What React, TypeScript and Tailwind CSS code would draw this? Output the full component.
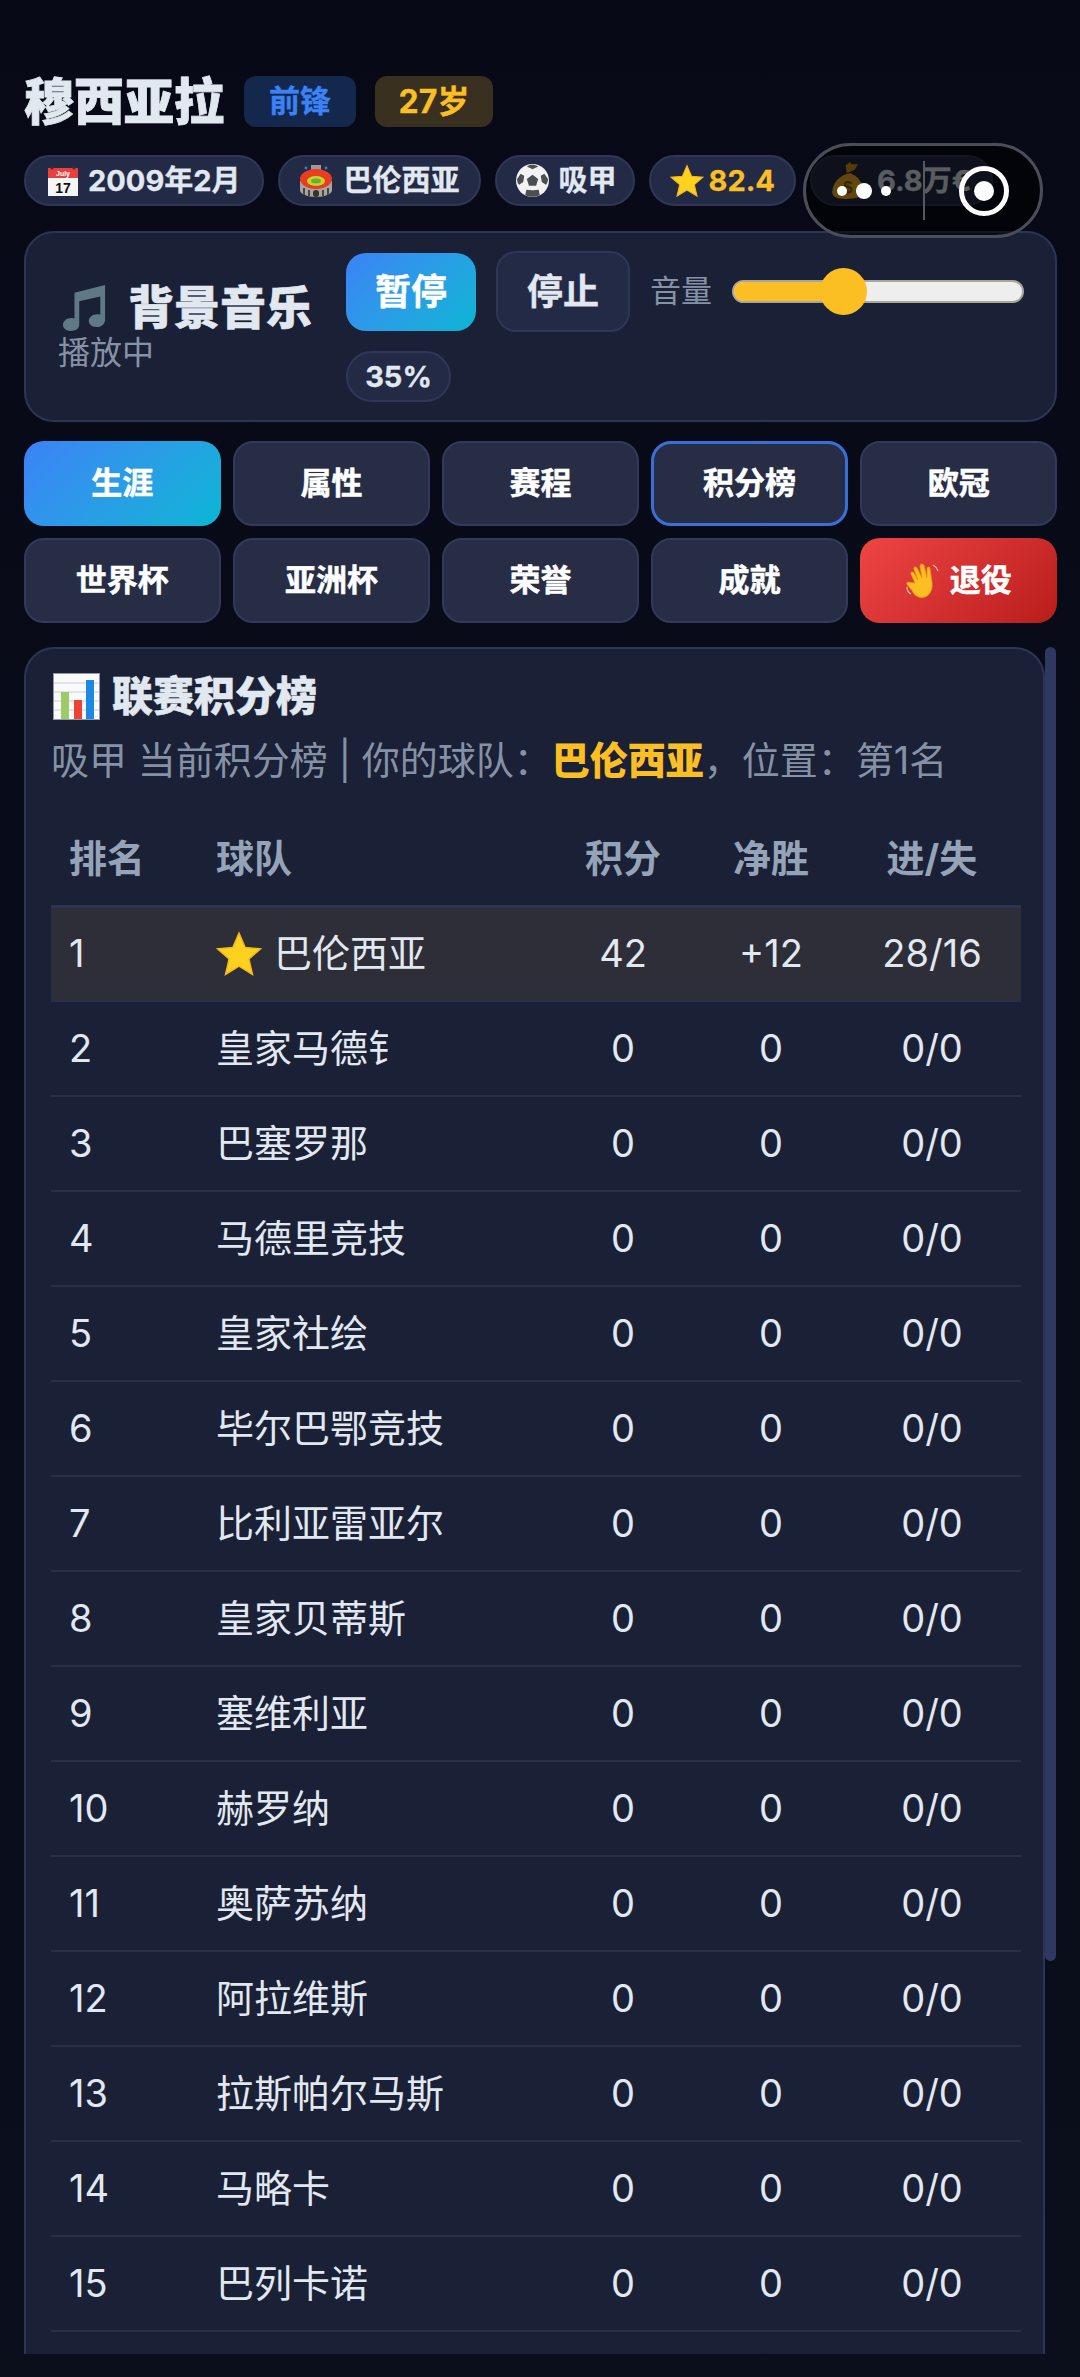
const teams = [
  "皇家马德钅",
  "巴塞罗那",
  "马德里竞技",
  "皇家社绘",
  "毕尔巴鄂竞技",
  "比利亚雷亚尔",
  "皇家贝蒂斯",
  "塞维利亚",
  "赫罗纳",
  "奥萨苏纳",
  "阿拉维斯",
  "拉斯帕尔马斯",
  "马略卡",
  "巴列卡诺",
];

const tabs = ["生涯", "属性", "赛程", "积分榜", "欧冠", "世界杯", "亚洲杯", "荣誉", "成就"];

function Star({ size }: { size: number }) {
  return (
    <svg width={size} height={size} viewBox="0 0 32 32" className="shrink-0">
      <path
        d="M16 1.5l4.3 10 10.7.9-8.1 7.1 2.5 10.7L16 24.5l-9.4 5.7 2.5-10.7L1 12.4l10.7-.9z"
        fill="#fcd21f"
        stroke="#f4b71c"
        strokeWidth="1"
      />
    </svg>
  );
}

function CalendarIcon() {
  return (
    <svg width="30" height="32" viewBox="0 0 30 32" className="shrink-0">
      <rect x="0" y="3" width="30" height="28" fill="#f5f5f5" />
      <rect x="0" y="3" width="30" height="10" fill="#e8403c" />
      <circle cx="4" cy="3" r="1.5" fill="#333" />
      <circle cx="26" cy="3" r="1.5" fill="#333" />
      <text x="15" y="11" textAnchor="middle" fontSize="7" fill="#fff" fontFamily="Liberation Sans">
        July
      </text>
      <text x="15" y="28" textAnchor="middle" fontSize="14" fontWeight="700" fill="#111" fontFamily="Liberation Sans">
        17
      </text>
    </svg>
  );
}

function StadiumIcon() {
  return (
    <svg width="34" height="34" viewBox="0 0 34 34" className="shrink-0">
      <rect x="12" y="1" width="10" height="5" fill="#9a9a9a" />
      <circle cx="7" cy="4" r="1.4" fill="#3d7bd9" />
      <circle cx="27" cy="4" r="1.4" fill="#3d7bd9" />
      <path d="M1 17h32v9c0 4-7 7-16 7S1 30 1 26z" fill="#a8a49f" />
      <path d="M5 24v7M10 26v6M24 26v6M29 24v7" stroke="#4a4642" strokeWidth="2" />
      <rect x="14" y="26" width="6" height="7" rx="3" fill="#35312e" />
      <ellipse cx="17" cy="15" rx="16" ry="10" fill="#ea3c1e" />
      <ellipse cx="17" cy="17" rx="9" ry="5" fill="#c5d42c" />
      <ellipse cx="17" cy="17" rx="5" ry="2.5" fill="#6cae34" />
    </svg>
  );
}

function SoccerIcon() {
  return (
    <svg width="33" height="33" viewBox="0 0 32 32" className="shrink-0">
      <circle cx="16" cy="16" r="16" fill="#f2f2f2" />
      <path d="M16 10.5l5.5 4-2 6.5h-7l-2-6.5z" fill="#4a4f52" />
      <path d="M10.5 2.5L16 5l5.5-2.5C18 0 13.5 0 10.5 2.5z" fill="#4a4f52" />
      <path d="M1 14.5l3.5-5 3.5 2-1 6-4 2.5c-1.5-1.5-2-3.5-2-5.5z" fill="#4a4f52" />
      <path d="M31 14.5l-3.500-5-3.500 2 1 6 4 2.500c1.500-1.500 2-3.500 2-5.500z" fill="#4a4f52" />
      <path d="M9 30l1-5 5 .5 2 0 5-.5 1 5c-4 2.500-10 2.500-14 0z" fill="#4a4f52" />
    </svg>
  );
}

function MoneyBagIcon() {
  return (
    <svg width="36" height="38" viewBox="0 0 32 34" className="shrink-0">
      <path d="M17 10C8 11 1 19 1 27c0 5 6 6 13 6s15-1 15-7c0-6-5-14-12-16z" fill="#f4b024" />
      <path d="M14 10l7-3 3-5-6 0-1-2-4 3z" fill="#d9951a" />
      <text x="15" y="28" textAnchor="middle" fontSize="15" fontWeight="700" fill="#8a5a0c" fontFamily="Liberation Sans">
        $
      </text>
    </svg>
  );
}

function MusicIcon() {
  return (
    <svg width="44" height="48" viewBox="0 0 46 50" className="ml-[5px] shrink-0">
      <path
        d="M12 10L44 2v36c0 5-4 8-9 8s-8-3-8-6.5c0-4 4-7 9-7 1.5 0 2.5.2 3 .5V14L17 19v24c0 5-4 7-9 7s-8-3-8-6.5c0-4 4-7 9-7 1 0 2.5.2 3 .5z"
        fill="#5f7986"
      />
    </svg>
  );
}

function ChartIcon() {
  return (
    <svg width="47" height="47" viewBox="0 0 47 47" className="ml-[2px] shrink-0">
      <rect x="0.5" y="0.5" width="46" height="46" fill="#fafafa" stroke="#8f99ab" />
      <path d="M1 10h45M1 19h45M1 28h45M1 37h45" stroke="#c9ced6" strokeWidth="1" />
      <rect x="8" y="19" width="8" height="27" fill="#9ccc65" />
      <rect x="21" y="27" width="8" height="19" fill="#ef4136" />
      <rect x="33" y="7" width="8" height="39" fill="#1e88e5" />
    </svg>
  );
}

function WaveIcon() {
  return (
    <svg width="34" height="36" viewBox="0 0 34 36" className="shrink-0">
      <path
        d="M9 20L5 11c-1-2 2-3 3-1l4 7-4-11c-1-2 2-3 3-1l5 10-2-12c0-2 3-3 4-.5l3 12 0-9c0-2 3-2 3 0l2 14c1 8-3 15-10 15-5 0-8-3-10-7l-5-6c-1-2 1-3 3-2z"
        fill="#fbbf24"
        stroke="#e89b10"
        strokeWidth="0.8"
      />
      <path d="M1 24c0 3 2 6 4 7M27 2c2 1 4 3 5 6" stroke="#f2b8b0" strokeWidth="1.3" fill="none" />
    </svg>
  );
}

function Pill({ icon, children, gold, padding }: { icon: React.ReactNode; children: React.ReactNode; gold?: boolean; padding: string }) {
  return (
    <div
      className={`flex h-[51px] items-center gap-[10px] rounded-full border-2 border-[#2f3757] bg-[#232a45] text-[29px] font-bold [-webkit-text-stroke:0.3px_currentColor] ${padding} ${
        gold ? "text-[#fbbf24]" : "text-[#e2e8f0]"
      }`}
    >
      {icon}
      <span>{children}</span>
    </div>
  );
}

export default function App() {
  return (
    <div className="h-[2377px] overflow-hidden bg-linear-to-b from-[#070a16] to-[#0b0f1c] pl-[24px] pr-[23px] pt-[76px] font-['Inter','Noto_Sans_CJK_SC',sans-serif] text-[#e2e8f0]">
      <div className="flex h-[51px] items-center">
        <h1 className="text-[50px] font-extrabold leading-none text-[#e2e8f0] [-webkit-text-stroke:0.8px_currentColor]">穆西亚拉</h1>
        <span className="ml-[20px] flex h-[51px] w-[112px] items-center justify-center rounded-[12px] bg-[#14274d] text-[31px] font-bold text-[#3b82f6] [-webkit-text-stroke:0.3px_currentColor]">
          前锋
        </span>
        <span className="ml-[19px] flex h-[51px] w-[118px] items-center justify-center rounded-[12px] bg-[#3a3020] text-[32px] font-bold text-[#fbbf24] [-webkit-text-stroke:0.3px_currentColor]">
          27岁
        </span>
      </div>

      <div className="mt-[28px] flex gap-[14px]">
        <Pill icon={<CalendarIcon />} padding="px-[22px]">
          2009年2月
        </Pill>
        <Pill icon={<StadiumIcon />} padding="px-[19px]">
          巴伦西亚
        </Pill>
        <Pill icon={<SoccerIcon />} padding="pl-[19px] pr-[16px]">
          吸甲
        </Pill>
        <Pill icon={<span className="-mr-[5px] block"><Star size={34} /></span>} padding="px-[19px]" gold>
          82.4
        </Pill>
        <Pill icon={<MoneyBagIcon />} padding="px-[19px]">
          6.8万€
        </Pill>
      </div>

      {/* mini program capsule */}
      <div className="absolute left-[803px] top-[143px] flex h-[95px] w-[240px] items-center rounded-full border-[3px] border-[#4b4e58] bg-black/60">
        <div className="ml-[31px] flex items-center gap-[9px]">
          <span className="h-[10px] w-[10px] rounded-full bg-white" />
          <span className="h-[16px] w-[16px] rounded-full bg-white" />
          <span className="h-[10px] w-[10px] rounded-full bg-white" />
        </div>
        <span className="ml-[32px] h-[59px] w-[2px] bg-[#55585f]" />
        <span className="ml-[34px] flex h-[50px] w-[50px] items-center justify-center rounded-full border-[5px] border-white">
          <span className="h-[20px] w-[20px] rounded-full bg-white" />
        </span>
      </div>

      <div className="mt-[25px] flex h-[191px] items-center rounded-[30px] border-2 border-[#2d3555] bg-[#1a2035] pl-[32px]">
        <div className="w-[288px] shrink-0">
          <div className="flex items-center gap-[21px] text-[46px] font-extrabold leading-[52px] [-webkit-text-stroke:0.6px_currentColor]">
            <MusicIcon />
            <span>背景音乐</span>
          </div>
          <div className="mt-0 text-[32px] leading-[40px] text-[#8592a6]">播放中</div>
        </div>
        <div className="flex w-[678px] flex-wrap items-center gap-x-[20px] gap-y-[19px]">
          <button className="h-[78px] w-[130px] rounded-[20px] bg-linear-135 from-[#3b82f6] to-[#06b6d4] text-[36px] font-bold text-white [-webkit-text-stroke:0.4px_currentColor]">
            暂停
          </button>
          <button className="h-[81px] w-[134px] rounded-[20px] border-2 border-[#2f3757] bg-[#232a45] text-[36px] font-bold text-[#e2e8f0] [-webkit-text-stroke:0.4px_currentColor]">
            停止
          </button>
          <div className="flex w-[374px] items-center gap-[20px]">
            <span className="text-[31px] text-[#8592a6]">音量</span>
            <div className="relative flex h-[23px] w-[292px] rounded-full border-2 border-[#a8a59a] bg-[#eeeeee]">
              <div className="w-[108px] rounded-l-full bg-[#fbbf24]" />
              <span className="absolute left-[86px] top-[-14px] h-[47px] w-[47px] rounded-full bg-[#fbbf24]" />
            </div>
          </div>
          <span className="flex h-[51px] w-[105px] items-center justify-center rounded-full border-2 border-[#2f3757] bg-[#232a45] text-[29px] font-bold text-[#e2e8f0] [-webkit-text-stroke:0.3px_currentColor]">
            35%
          </span>
        </div>
      </div>

      <div className="mt-[19px] grid grid-cols-5 gap-x-[12.5px] gap-y-[12px]">
        {tabs.map((tab, i) => (
          <button
            key={tab}
            className={`flex h-[85px] items-center justify-center rounded-[20px] text-[31px] font-bold text-white [-webkit-text-stroke:0.5px_currentColor] ${
              i === 0
                ? "bg-linear-135 from-[#3b82f6] to-[#06b6d4]"
                : i === 3
                  ? "border-[3px] border-[#3b6fd8] bg-[#262d45]"
                  : "border-2 border-[#32395a] bg-[#262d45]"
            }`}
          >
            {tab}
          </button>
        ))}
        <button className="flex h-[85px] items-center justify-center gap-[10px] rounded-[20px] bg-linear-135 from-[#ef4444] to-[#b91c1c] text-[31px] font-bold text-white [-webkit-text-stroke:0.5px_currentColor]">
          <WaveIcon />
          退役
        </button>
      </div>

      <div className="mt-[24px] flex items-start">
        <div className="h-[1707px] w-[1021px] shrink-0 overflow-hidden rounded-t-[30px] border-x-2 border-t-2 border-[#2d3555] bg-[#1a2035] px-[25px] pt-[23px]">
          <div className="flex items-center gap-[12px]">
            <ChartIcon />
            <h2 className="text-[41px] font-extrabold leading-[48px] text-[#e2e8f0] [-webkit-text-stroke:0.5px_currentColor]">联赛积分榜</h2>
          </div>
          <p className="mt-[18px] text-[38px] leading-[44px] text-[#8592a6]">
            吸甲 当前积分榜 | 你的球队：<strong className="font-extrabold text-[#fbbf24]">巴伦西亚</strong>，位置：第1名
          </p>
          <table className="mt-[30px] w-[970px] table-fixed border-collapse text-[38px]">
            <colgroup>
              <col className="w-[150px]" />
              <col className="w-[346px]" />
              <col className="w-[152px]" />
              <col className="w-[144px]" />
              <col className="w-[178px]" />
            </colgroup>
            <thead>
              <tr className="h-[94px] border-b-[3px] border-[#2c3654] text-[38px] font-bold text-[#94a3b8]">
                <th className="pl-[18px] text-left">排名</th>
                <th className="pl-[15px] text-left">球队</th>
                <th>积分</th>
                <th>净胜</th>
                <th>进/失</th>
              </tr>
            </thead>
            <tbody className="text-center">
              <tr className="h-[95px] border-b-2 border-[#283047] bg-[#2d2e37]">
                <td className="pl-[18px] text-left">1</td>
                <td className="pl-[15px] text-left">
                  <span className="flex items-center gap-[12px]">
                    <Star size={46} />
                    巴伦西亚
                  </span>
                </td>
                <td>42</td>
                <td>+12</td>
                <td>28/16</td>
              </tr>
              {teams.map((team, i) => (
                <tr key={team} className="h-[95px] border-b-2 border-[#283047]">
                  <td className="pl-[18px] text-left">{i + 2}</td>
                  <td className="pl-[15px] text-left">
                    <span className={`block overflow-hidden whitespace-nowrap ${i === 0 ? "w-[172px]" : ""}`}>{team}</span>
                  </td>
                  <td>0</td>
                  <td>0</td>
                  <td>0/0</td>
                </tr>
              ))}
            </tbody>
          </table>
        </div>
        <div className="h-[1314px] w-[11px] rounded-full bg-[#2f3860]" />
      </div>
    </div>
  );
}
